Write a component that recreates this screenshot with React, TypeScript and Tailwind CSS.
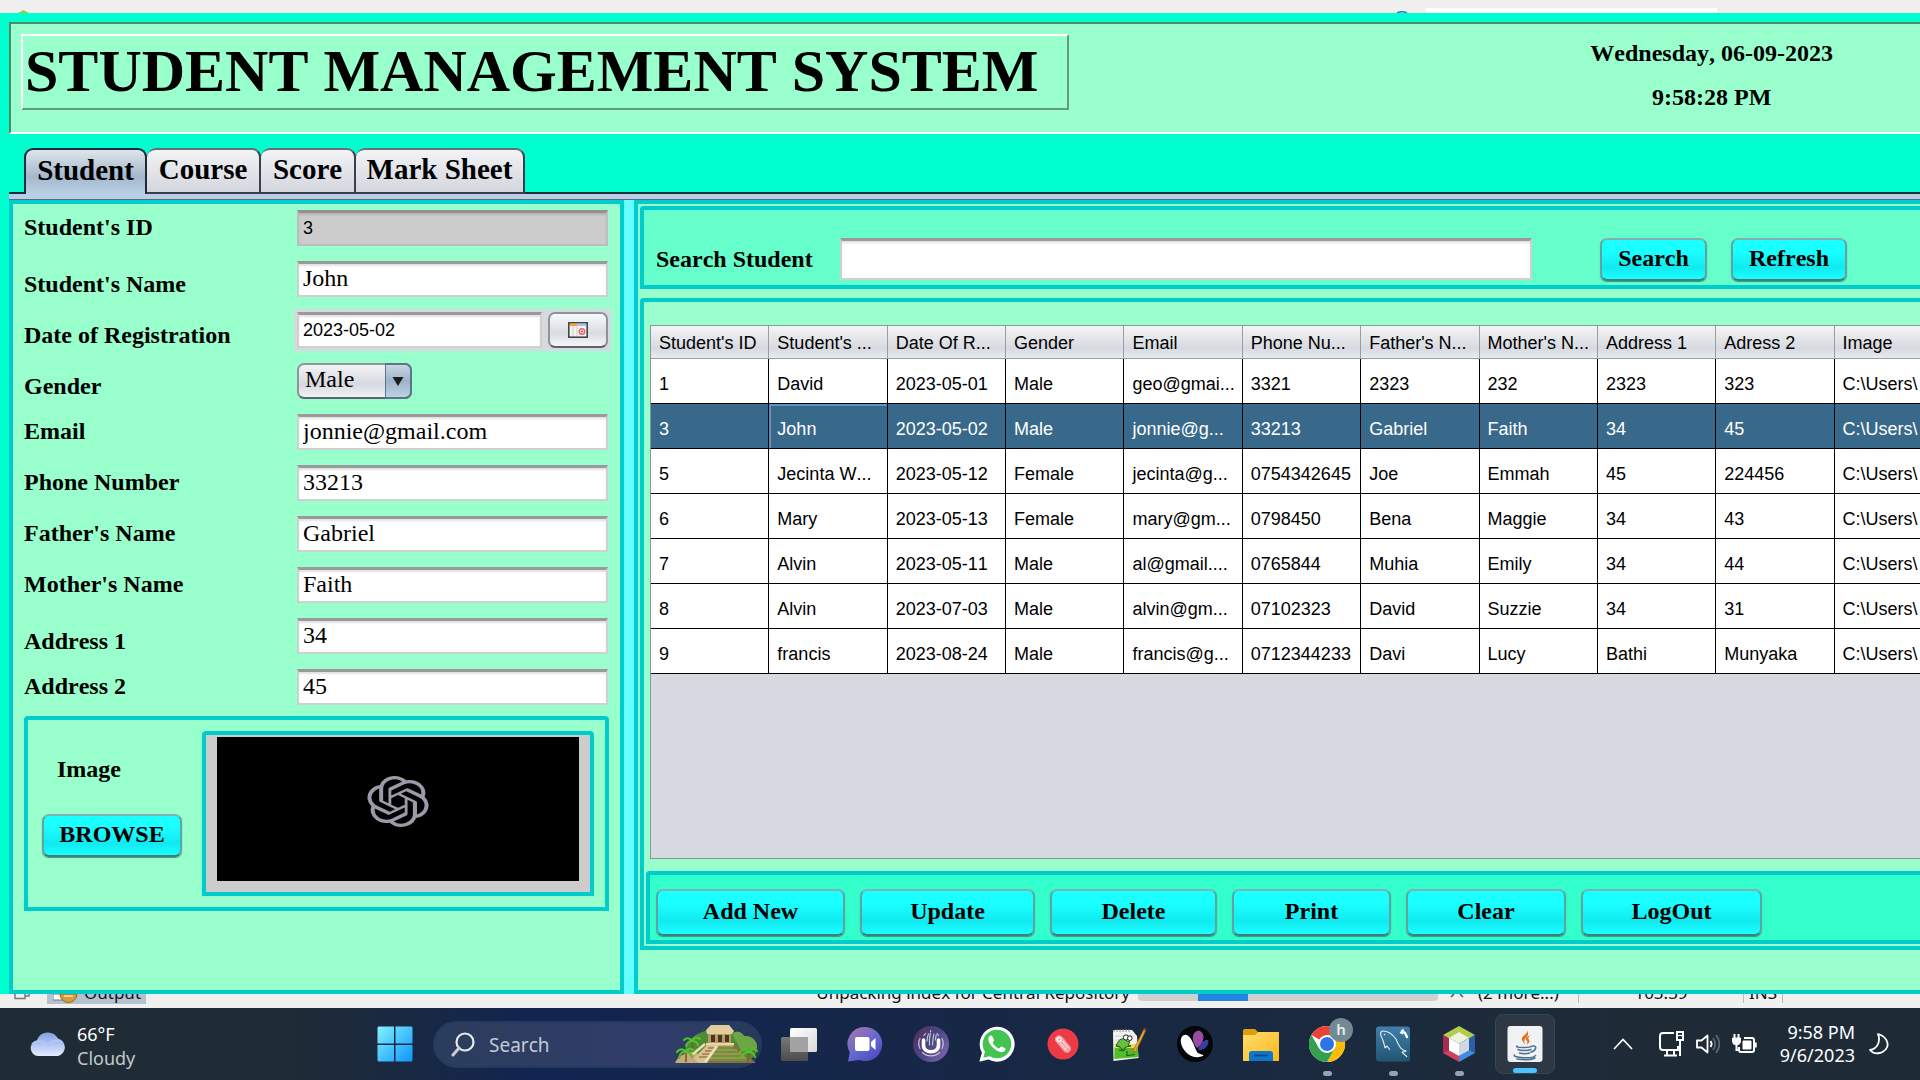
import React from "react";

const serif = "font-['Liberation_Serif',serif]";
const panelBorder = "border-4 border-[#00cccc]";

const fieldBox =
  "h-9 min-w-0 border-2 border-t-[3px] border-[#cdd2ce] border-t-[#9a9a9a] bg-white px-1 pb-0.5 text-black shadow-[inset_0_2px_2px_#e2e2e2] outline-none";

const aquaButton =
  "rounded-[7px] border-2 border-[#5fa3a3] border-t-[#7fb3b0] border-b-[#3f7f80] bg-linear-to-b from-[#1affff] from-30% via-[#10eaf0] via-70% to-[#1affff] pb-[3px] text-center text-2xl font-bold text-black shadow-[0_1px_1px_#33997d]";

const columns = [
  "Student's ID",
  "Student's ...",
  "Date Of R...",
  "Gender",
  "Email",
  "Phone Nu...",
  "Father's N...",
  "Mother's N...",
  "Address 1",
  "Adress 2",
  "Image",
];

const path = "C:\\Users\\";

const rows = [
  ["1", "David", "2023-05-01", "Male", "geo@gmai...", "3321", "2323", "232", "2323", "323", path],
  ["3", "John", "2023-05-02", "Male", "jonnie@g...", "33213", "Gabriel", "Faith", "34", "45", path],
  ["5", "Jecinta W...", "2023-05-12", "Female", "jecinta@g...", "0754342645", "Joe", "Emmah", "45", "224456", path],
  ["6", "Mary", "2023-05-13", "Female", "mary@gm...", "0798450", "Bena", "Maggie", "34", "43", path],
  ["7", "Alvin", "2023-05-11", "Male", "al@gmail....", "0765844", "Muhia", "Emily", "34", "44", path],
  ["8", "Alvin", "2023-07-03", "Male", "alvin@gm...", "07102323", "David", "Suzzie", "34", "31", path],
  ["9", "francis", "2023-08-24", "Male", "francis@g...", "0712344233", "Davi", "Lucy", "Bathi", "Munyaka", path],
];

function Row({ id, label, low, children }: { id: string; label: string; low?: boolean; children: React.ReactNode }) {
  return (
    <div className="flex h-9">
      <label
        htmlFor={id}
        className={
          low
            ? "flex h-9 w-[273px] shrink-0 items-center pt-2.5 text-2xl font-bold"
            : "flex h-9 w-[273px] shrink-0 items-center pb-0.5 text-2xl font-bold"
        }
      >
        {label}
      </label>
      {children}
    </div>
  );
}

function TextRow({ id, label, value, low }: { id: string; label: string; value: string; low?: boolean }) {
  return (
    <Row id={id} label={label} low={low}>
      <input id={id} defaultValue={value} className={`${fieldBox} flex-1 text-2xl`} />
    </Row>
  );
}

function StudentForm() {
  return (
    <section className={`${panelBorder} flex w-[615px] shrink-0 flex-col bg-[#99ffcc] pt-1.5 pl-[11px]`}>
      <form className="flex flex-col gap-[15px] pr-3" onSubmit={(e) => e.preventDefault()}>
        <Row id="sid" label="Student's ID">
          <input
            id="sid"
            readOnly
            defaultValue="3"
            className="h-9 min-w-0 flex-1 border-2 border-t-[3px] border-[#bdbdbd] border-t-[#929292] bg-[#cccccc] px-1 font-['Liberation_Sans',sans-serif] text-lg shadow-[inset_0_2px_2px_#b5b5b5] outline-none"
          />
        </Row>
        <TextRow id="sname" label="Student's Name" value="John" low />
        <Row id="reg" label="Date of Registration" low>
          <div className="flex flex-1 gap-1.5 bg-[#d6d9df] shadow-[0_0_0_3px_#d6d9df]">
            <input
              id="reg"
              defaultValue="2023-05-02"
              className="h-9 min-w-0 flex-1 border-2 border-t-[3px] border-[#cdd2ce] border-t-[#9a9a9a] bg-white px-1 font-['Liberation_Sans',sans-serif] text-lg shadow-[inset_0_2px_2px_#e2e2e2] outline-none"
            />
            <button
              aria-label="Choose date"
              className="flex h-9 w-[60px] items-center justify-center rounded-[7px] border-2 border-[#8f939b] border-b-[#5d626b] bg-linear-to-b from-[#f8f9fa] via-[#d9dce2] via-60% to-[#f4f6f9]"
            >
              <svg width="20" height="16" viewBox="0 0 20 16">
                <rect x="0.8" y="0.8" width="18.4" height="14.4" fill="#f4f4f4" stroke="#444" strokeWidth="1.6" />
                <rect x="2" y="1.6" width="7" height="2.4" fill="#f5a623" />
                <rect x="9" y="1.6" width="9" height="2.4" fill="#a9c3e6" />
                <path d="M5 4v10M9 4v10" stroke="#ccc" />
                <circle cx="14" cy="9.5" r="2.8" fill="#fbd3d3" stroke="#e46a6a" strokeWidth="1.4" />
                <path d="M13 9.5h2" stroke="#d33" />
              </svg>
            </button>
          </div>
        </Row>
        <Row id="gender" label="Gender" low>
          <div className="relative h-9 w-[115px]">
            <select
              id="gender"
              defaultValue="Male"
              className="h-9 w-full appearance-none rounded-[7px] border-2 border-[#8f939b] border-b-[#5d626b] bg-linear-to-b from-[#f2f3f5] via-[#d6d9df] via-60% to-[#f0f2f5] pb-1 pl-1.5 text-2xl leading-7 text-black outline-none"
            >
              <option>Male</option>
              <option>Female</option>
            </select>
            <span className="pointer-events-none absolute top-0 right-0 flex h-9 w-[27px] items-center justify-center rounded-r-[7px] border-2 border-l border-[#5c7388] bg-linear-to-b from-[#c9d6e3] via-[#9fb3c8] via-50% to-[#bdd2e6]">
              <svg width="12" height="9" viewBox="0 0 12 9">
                <path d="M0.5 0h11L6 9z" fill="#1c1c1c" />
              </svg>
            </span>
          </div>
        </Row>
        <TextRow id="email" label="Email" value="jonnie@gmail.com" />
        <TextRow id="phone" label="Phone Number" value="33213" />
        <TextRow id="father" label="Father's Name" value="Gabriel" />
        <TextRow id="mother" label="Mother's Name" value="Faith" />
        <TextRow id="addr1" label="Address 1" value="34" low />
        <TextRow id="addr2" label="Address 2" value="45" />
      </form>

      <div className={`${panelBorder} mt-[11px] mr-[11px] flex h-[195px] rounded-t-sm pt-[11px] pr-[11px] pl-[14px]`}>
        <div className="flex w-[160px] shrink-0 flex-col">
          <span className="mt-6 pl-[15px] text-2xl leading-7 font-bold">Image</span>
          <button className={`${aquaButton} mt-[31px] h-[43px] w-[140px]`}>BROWSE</button>
        </div>
        <div className={`${panelBorder} h-[165px] flex-1 rounded-t-sm bg-[#cccccc] px-[11px] pt-0.5`}>
          <div className="flex h-36 items-center justify-center bg-black pb-4">
            <svg width="62" height="51" viewBox="0 0 24 24" preserveAspectRatio="none" fill="#9a9aa8">
              <path d="M22.2819 9.8211a5.9847 5.9847 0 0 0-.5157-4.9108 6.0462 6.0462 0 0 0-6.5098-2.9A6.0651 6.0651 0 0 0 4.9807 4.1818a5.9847 5.9847 0 0 0-3.9977 2.9 6.0462 6.0462 0 0 0 .7427 7.0966 5.98 5.98 0 0 0 .511 4.9107 6.051 6.051 0 0 0 6.5146 2.9001A5.9847 5.9847 0 0 0 13.2599 24a6.0557 6.0557 0 0 0 5.7718-4.2058 5.9894 5.9894 0 0 0 3.9977-2.9001 6.0557 6.0557 0 0 0-.7475-7.0729zm-9.022 12.6081a4.4755 4.4755 0 0 1-2.8764-1.0408l.1419-.0804 4.7783-2.7582a.7948.7948 0 0 0 .3927-.6813v-6.7369l2.02 1.1686a.071.071 0 0 1 .038.052v5.5826a4.504 4.504 0 0 1-4.4945 4.4944zm-9.6607-4.1254a4.4708 4.4708 0 0 1-.5346-3.0137l.142.0852 4.783 2.7582a.7712.7712 0 0 0 .7806 0l5.8428-3.3685v2.3324a.0804.0804 0 0 1-.0332.0615L9.74 19.9502a4.4992 4.4992 0 0 1-6.1408-1.6464zM2.3408 7.8956a4.485 4.485 0 0 1 2.3655-1.9728V11.6a.7664.7664 0 0 0 .3879.6765l5.8144 3.3543-2.0201 1.1685a.0757.0757 0 0 1-.071 0l-4.8303-2.7865A4.504 4.504 0 0 1 2.3408 7.872zm16.5963 3.8558L13.1038 8.364 15.1192 7.2a.0757.0757 0 0 1 .071 0l4.8303 2.7913a4.4944 4.4944 0 0 1-.6765 8.1042v-5.6772a.79.79 0 0 0-.407-.667zm2.0107-3.0231l-.142-.0852-4.7735-2.7818a.7759.7759 0 0 0-.7854 0L9.409 9.2297V6.8974a.0662.0662 0 0 1 .0284-.0615l4.8303-2.7866a4.4992 4.4992 0 0 1 6.6802 4.66zM8.3065 12.863l-2.02-1.1638a.0804.0804 0 0 1-.038-.0567V6.0742a4.4992 4.4992 0 0 1 7.3757-3.4537l-.142.0805L8.704 5.459a.7948.7948 0 0 0-.3927.6813zm1.0976-2.3654l2.602-1.4998 2.6069 1.4998v2.9994l-2.5974 1.4997-2.6067-1.4997Z" />
            </svg>
          </div>
        </div>
      </div>
    </section>
  );
}

function StudentTable() {
  return (
    <div className="ml-1.5 h-[534px] overflow-hidden border border-r-0 border-[#8b95a0] bg-[#d6d9df]">
      <table className="w-[1302px] table-fixed border-separate border-spacing-0 font-['Liberation_Sans',sans-serif] text-lg">
        <thead>
          <tr>
            {columns.map((c) => (
              <th
                key={c}
                className="h-[33px] overflow-hidden border-r border-b border-[#9a9da5] bg-linear-to-b from-[#f4f5f7] via-[#d6d9df] via-70% to-[#e8ebf2] p-0 pt-0.5 pl-2 text-left font-normal whitespace-nowrap"
              >
                {c}
              </th>
            ))}
          </tr>
        </thead>
        <tbody>
          {rows.map((r, i) => (
            <tr key={r[0]} className={i === 1 ? "bg-[#39698a] text-white" : "bg-white text-black"}>
              {r.map((v, j) => (
                <td
                  key={j}
                  className={
                    i === 1 && j === 1
                      ? "h-[45px] overflow-hidden border-r border-b border-black p-0 pt-[5px] pl-2 whitespace-nowrap shadow-[inset_1px_1px_0_1px_#5f92c4]"
                      : "h-[45px] overflow-hidden border-r border-b border-black p-0 pt-[5px] pl-2 whitespace-nowrap"
                  }
                >
                  {v}
                </td>
              ))}
            </tr>
          ))}
        </tbody>
      </table>
    </div>
  );
}

function RecordsPanel() {
  return (
    <section className="flex min-w-0 flex-1 flex-col border-4 border-r-0 border-[#00cccc] bg-[#99ffcc] pt-0.5 pl-0.5">
      <div className="flex h-[83px] items-start rounded-tl-sm border-4 border-r-0 border-[#00cccc] bg-[#66ffcc] pt-7 pl-3">
        <label htmlFor="search" className="flex h-[42px] w-[184px] shrink-0 items-center text-2xl font-bold">
          Search Student
        </label>
        <input
          id="search"
          className="h-[42px] w-[692px] border-2 border-t-[3px] border-[#cdd2ce] border-t-[#9a9a9a] bg-white px-1 text-2xl shadow-[inset_0_2px_2px_#e2e2e2] outline-none"
        />
        <button className={`${aquaButton} ml-[68px] h-[43px] w-[107px]`}>Search</button>
        <button className={`${aquaButton} ml-6 h-[43px] w-[116px]`}>Refresh</button>
      </div>

      <div className="mt-[9px] flex flex-col rounded-tl-sm border-4 border-r-0 border-[#00cccc] pt-[23px] pb-0.5">
        <StudentTable />
        <div className="mt-3 ml-0.5 flex h-[73px] gap-[15px] rounded-tl-sm border-4 border-r-0 border-[#00cccc] bg-[#33ffcc] pt-[14px] pl-1.5">
          <button className={`${aquaButton} h-[47px] w-[189px]`}>Add New</button>
          <button className={`${aquaButton} h-[47px] w-[175px]`}>Update</button>
          <button className={`${aquaButton} h-[47px] w-[167px]`}>Delete</button>
          <button className={`${aquaButton} h-[47px] w-[159px]`}>Print</button>
          <button className={`${aquaButton} h-[47px] w-[160px]`}>Clear</button>
          <button className={`${aquaButton} h-[47px] w-[181px]`}>LogOut</button>
        </div>
      </div>
    </section>
  );
}

const tabBase =
  "h-[46px] rounded-t-[9px] border-2 pb-1 text-[29px] leading-none font-bold text-black";
const tabIdle = `${tabBase} border-[#3c3f4a] border-t-[#6a6d78] bg-linear-to-b from-[#f2f3f5] to-[#d4d6de]`;

function Tabs() {
  return (
    <nav className="ml-[9px] flex h-[52px] shrink-0 pl-[15px] shadow-[inset_0_-1px_0_#5c6b85,inset_0_-6px_0_#b8cfe5,inset_0_-8px_0_#14303a]">
      <button className={`${tabBase} w-[123px] border-b-0 border-[#1e2a3a] bg-linear-to-b from-[#dfe6ec] via-[#a4b8cc] via-60% to-[#b8cfe5]`}>
        Student
      </button>
      <button className={`${tabIdle} w-[114px] border-l-0`}>Course</button>
      <button className={`${tabIdle} w-[95px] border-l-0`}>Score</button>
      <button className={`${tabIdle} w-[169px] border-l-0`}>Mark Sheet</button>
    </nav>
  );
}

function TaskView() {
  return (
    <svg width="36" height="36" viewBox="0 0 36 36">
      <defs>
        <linearGradient id="tv1" x1="0" y1="0" x2="1" y2="1">
          <stop offset="0" stopColor="#fff" />
          <stop offset="1" stopColor="#d9d9d9" />
        </linearGradient>
        <linearGradient id="tv2" x1="0" y1="0" x2="0" y2="1">
          <stop offset="0" stopColor="#777" />
          <stop offset="1" stopColor="#4c4c4c" />
        </linearGradient>
      </defs>
      <rect x="9" y="2" width="27" height="24" rx="1.5" fill="url(#tv1)" />
      <rect x="0" y="11" width="27" height="24" rx="1.5" fill="url(#tv2)" />
      <path d="M9 11h18v15H10.500a1.500 1.500 0 0 1-1.500-1.500z" fill="#a3a3a3" />
    </svg>
  );
}

function Meet() {
  return (
    <svg width="36" height="36" viewBox="0 0 36 36">
      <defs>
        <linearGradient id="mt" x1="0" y1="0.2" x2="0.6" y2="1">
          <stop offset="0" stopColor="#a071b4" />
          <stop offset="0.6" stopColor="#6268d0" />
          <stop offset="1" stopColor="#5350c0" />
        </linearGradient>
      </defs>
      <path d="M18 1a17 17 0 1 1-5.500 33L1 35.500l1.800-9A17 17 0 0 1 18 1z" fill="url(#mt)" />
      <rect x="8" y="11" width="14.500" height="14" rx="2" fill="#fff" />
      <path d="M24 16l4.500-4v12L24 20z" fill="#fff" />
    </svg>
  );
}

function UApp() {
  return (
    <svg width="36" height="36" viewBox="0 0 36 36" fill="none">
      <defs>
        <linearGradient id="ua" x1="0" y1="0.2" x2="1" y2="0.9">
          <stop offset="0" stopColor="#51305f" />
          <stop offset="0.5" stopColor="#4a4a86" />
          <stop offset="1" stopColor="#8668b4" />
        </linearGradient>
      </defs>
      <circle cx="18" cy="18" r="18" fill="url(#ua)" />
      <path d="M10.500 14v5c0 9 15 9 15 0v-5" stroke="#fff" strokeWidth="3.600" strokeLinecap="round" />
      <path
        d="M14 15c0-3 .5-5 1.500-7M16.500 19c-.4-4 0-8 1-12M19.500 19c.4-4 .3-8 1.500-11M22.500 14c0-2 .3-3 .8-5M11 9.500l1.500-2M25.500 9.500L24 7.500M17.500 5.500l.3-1M7 12.500c-1.500 3-1.500 7 0 10M29 12.500c1.500 3 1.500 7 0 10M9.500 26.500c4.500 4.500 12.500 4.500 17 0"
        stroke="#c7c2de"
        strokeWidth="1.200"
        strokeLinecap="round"
      />
    </svg>
  );
}

function WhatsApp() {
  return (
    <svg width="36" height="36" viewBox="0 0 36 36">
      <path d="M0.300 35.800l2.600-9A17.500 17.500 0 1 1 9.500 33.400z" fill="#fff" />
      <path d="M4.300 31.800l1.700-6A14.300 14.300 0 1 1 10.700 30.300z" fill="#43c351" />
      <path
        d="M12.500 9.500c-1-.4-2.600.5-3 2.200-.8 3.500 2 7.500 5 10.400 3 2.800 6.500 4.600 9.300 4 2-.5 3-2 2.700-3.300-.1-.6-3.600-2.300-4.300-2.200-.8.200-1.500 2-2.300 2-1.400-.1-6-4.300-6.300-5.800 0-.8 1.400-1.600 1.400-2.500 0-.6-1.500-4.300-2.500-4.800z"
        fill="#fff"
      />
    </svg>
  );
}

function RedApp() {
  return (
    <svg width="36" height="36" viewBox="0 0 36 36" fill="none">
      <circle cx="18" cy="18" r="15.500" fill="#ed3b45" />
      <g transform="rotate(50 18 18)">
        <rect x="8" y="14" width="20" height="8" rx="4" fill="#f4a2a5" />
        <circle cx="12" cy="18" r="2" stroke="#fff" strokeWidth="1.200" />
        <path d="M16 16.500h8M16 19.500h8" stroke="#fbdcdd" strokeWidth="1.200" strokeLinecap="round" />
      </g>
    </svg>
  );
}

function NotepadPP() {
  return (
    <svg width="36" height="36" viewBox="0 0 36 36">
      <path d="M2 4h19l5 6 1.500 22L2.500 35z" fill="#f5f5f2" />
      <path d="M3 4v2M6 3v3M9 3v3M12 3v3M15 3v3M18 3v3" stroke="#888" />
      <path d="M4 10h19M4 14h8" stroke="#bcd0dc" />
      <path d="M3.500 21h23l.8 10-24 2z" fill="#52bd2a" />
      <path d="M3.500 18h22v4h-22z" fill="#f1d95c" />
      <path d="M7 16c2-4 7-4 9-1l3 1-2 3 3 1-5 1-4 3-2-3-4-1z" fill="#63c23f" stroke="#25571a" />
      <path d="M8 24l4 1 3-2M6 20l3 1" stroke="#25571a" fill="none" />
      <circle cx="15" cy="11.500" r="2.600" fill="#fff" stroke="#222" />
      <circle cx="18.800" cy="12.200" r="2.300" fill="#fff" stroke="#222" />
      <path d="M16 25v4.500l8-1" fill="none" stroke="#24611a" strokeWidth="1.200" />
      <path d="M33 3l2 1-10 21-3 2 .6-3.500z" fill="#efa92b" stroke="#8c5b12" strokeWidth="0.600" />
      <path d="M33 2l2.300 1-1 2.200-2.200-1z" fill="#a8402c" />
    </svg>
  );
}

function Petals() {
  return (
    <svg width="36" height="36" viewBox="0 0 36 36">
      <circle cx="18" cy="18" r="18" fill="#05060a" />
      <path d="M31 14c-2-1.500-8 2-10 10 6 1 12-5 10-10z" fill="#3b3f9c" />
      <path d="M22 4.500c-8 1-8 11-2 17.500 6-4 10-14 2-17.500z" fill="#9a4aa3" />
      <path d="M6 9.500c-5 4-1 14 5 18.500 5 3.500 10 4 15 2 2-2-4-1-6-4-3-6-7-21-14-16.500z" fill="#fff" />
    </svg>
  );
}

function Folder() {
  return (
    <svg width="36" height="36" viewBox="0 0 36 36">
      <defs>
        <linearGradient id="fd" x1="0" y1="0" x2="1" y2="1">
          <stop offset="0" stopColor="#ffdd6e" />
          <stop offset="1" stopColor="#fbb91a" />
        </linearGradient>
      </defs>
      <path d="M0 4.500A1.500 1.500 0 0 1 1.500 3H12l3 3h3v8H0z" fill="#dd9f0c" />
      <path d="M0 9h12l3.500-3H36v29H0z" fill="url(#fd)" />
      <path d="M6 35v-7a3 3 0 0 1 3-3h18a3 3 0 0 1 3 3v7z" fill="#0f75c8" />
      <path d="M11 29.500h14" stroke="#0a4b8c" strokeWidth="1.800" />
    </svg>
  );
}

function Chrome() {
  return (
    <svg width="46" height="44" viewBox="0 0 46 44" className="-mt-2 ml-2.5">
      <circle cx="18" cy="26" r="18" fill="#fff" />
      <path d="M18 26L2.400 17a18 18 0 0 1 31.200 0z" fill="#ea4335" />
      <path d="M18 17h15.600A18 18 0 0 1 18 44l7.800-13.500z" fill="#fbbc05" />
      <path d="M10.200 30.500L2.400 17A18 18 0 0 0 18 44l7.800-13.500z" fill="#34a04e" />
      <circle cx="18" cy="26" r="9" fill="#fff" />
      <circle cx="18" cy="26" r="7" fill="#2f74e6" />
      <circle cx="32" cy="12" r="12" fill="#728a94" />
      <text x="32" y="17" textAnchor="middle" fontSize="15" fontWeight="600" fill="#e6ecee" fontFamily="Noto Sans, sans-serif">
        h
      </text>
    </svg>
  );
}

function MySql() {
  return (
    <svg width="36" height="36" viewBox="0 0 36 36" fill="none">
      <defs>
        <linearGradient id="ms" x1="0" y1="0" x2="0" y2="1">
          <stop offset="0" stopColor="#3e80ab" />
          <stop offset="1" stopColor="#225470" />
        </linearGradient>
      </defs>
      <rect x="1" y="0.500" width="34" height="35" rx="3" fill="url(#ms)" />
      <path
        d="M10 22c-1-4-1-6-3-10-2-3-2-7 1-7 6 0 10 4 13 8 1 3 2 5 4 8 1 2 3 3 6 4-1 1-3 1-4 1 1 2 4 3 5 5M10 22l2-2 3 4M9 8l1 1"
        stroke="#e7eef3"
        strokeWidth="1.100"
        strokeLinejoin="round"
      />
      <path d="M27 5l3 2 2 4" stroke="#fff" strokeWidth="2.400" strokeLinecap="round" />
      <path d="M25.500 6.500l2 1M28 3.500v2" stroke="#fff" strokeWidth="1.500" strokeLinecap="round" />
    </svg>
  );
}

function NetBeans() {
  return (
    <svg width="36" height="36" viewBox="0 0 36 36">
      <path d="M18 0l16 9-6 3.500-10-5.500-10 5.500L2 9z" fill="#b3cc50" />
      <path d="M2 9l6 3.500v12L18 30v6L2 27z" fill="#d0405f" />
      <path d="M34 9l-6 3.500v12L18 30v6l16-9z" fill="#3f8de0" />
      <path d="M2 9l6 3.500v12L2 27z" fill="#a92a4a" />
      <path d="M34 9l-6 3.500v12l6 2.500z" fill="#2c5fa6" />
      <path d="M18 6l10 6-10 5.500L8 12z" fill="#eff3de" />
      <path d="M8 12l10 5.500V30L8 24.500z" fill="#fff" />
      <path d="M28 12l-10 5.500V30l10-5.500z" fill="#cfd8e4" />
    </svg>
  );
}

function JavaIcon() {
  return (
    <svg width="36" height="36" viewBox="0 0 36 36" fill="none">
      <rect x="0.500" y="0" width="35" height="36" rx="3" fill="#f1f2f4" />
      <path d="M20 3c3 5-7 7-5 11 .6 1.500 2 3 3 5-1-4-1-5 1-7s3-5 1-9z" fill="#e8711c" />
      <path d="M24 9c-5 2-6 4-4 6 1 1.500 0 3-1 4 4-2 4-4 2.500-6-.8-1 .5-2.500 2.500-4z" fill="#e8711c" />
      <path
        d="M10 20c-3 2 13 2 15 0M11 23.500c2 1.300 10 1.300 13 0M12.500 27c2 1 8 1 10 0M25 20c6-1 4 5-1 6M7.500 29c-3 3 19 4 21 .5M10 33c6 1 14 1 18-1"
        stroke="#4f6f92"
        strokeWidth="1.500"
        strokeLinecap="round"
      />
    </svg>
  );
}

function Temple() {
  return (
    <svg width="86" height="40" viewBox="0 0 86 40">
      <path d="M10 30c2-14 12-22 26-24l22 4c4-4 10-2 12 2 8-1 14 6 13 12 0 6-4 10-10 14l-40 1z" fill="#4e8c33" />
      <path d="M58 10c4-4 10-2 12 2 8-1 14 6 13 12l-16 2z" fill="#6ba647" />
      <path d="M1 39c3-7 10-11 20-11l16 11z" fill="#c8aa78" />
      <path d="M30 20h30l22 19H26z" fill="#8a6c40" />
      <path d="M38 24h22M37 28h28M36 32h35M34 36h42" stroke="#5f9c36" strokeWidth="2" />
      <path d="M38 22h21M37 26h26M36 30h32M34 34h38" stroke="#c9ab72" strokeWidth="1.200" />
      <path d="M34 9h23v11H34z" fill="#b79a66" />
      <path d="M37 1h18l5 6-2 3H33l-1-4z" fill="#e2cd9b" />
      <path d="M37 11h4v7h-4zM44 11h4v7h-4zM51 11h4v7h-4z" fill="#4a351d" />
      <path d="M32 19h28v2.500H32z" fill="#e8d6a8" />
      <path d="M33 21h12L33 39H24L20 34z" fill="#d9c190" />
      <path d="M34 24h8M31 27h9M28 30h10M25 33h11" stroke="#9b7c4d" strokeWidth="1.400" />
      <path d="M31 20L19 30M43 22L31 38" stroke="#f0e0b6" strokeWidth="2.500" />
      <path d="M12 28v10M18 17l1 9M75 28l-1 10" stroke="#7b5a2b" strokeWidth="1.600" />
      <path
        d="M12 28c-3-4-7-3-9 0M12 28c2-4 6-4 8-1M12 28c-4-1-6 2-7 6M12 28c3 0 5 2 6 5M18 17c-3-4-6-3-8-1M18 17c2-4 6-4 8-2M18 17c-4 0-5 2-6 5M18 17c3 0 5 1 6 4M75 28c-3-4-7-3-9 0M75 28c2-4 6-4 8-1M75 28c-4-1-6 2-7 6M75 28c3 0 5 2 6 5"
        fill="none"
        stroke="#55c02c"
        strokeWidth="2.200"
        strokeLinecap="round"
      />
    </svg>
  );
}

const apps = [
  { name: "Task view", icon: <TaskView /> },
  { name: "Meet", icon: <Meet /> },
  { name: "U", icon: <UApp /> },
  { name: "WhatsApp", icon: <WhatsApp /> },
  { name: "Clip", icon: <RedApp /> },
  { name: "Notepad++", icon: <NotepadPP /> },
  { name: "Petals", icon: <Petals /> },
  { name: "File Explorer", icon: <Folder /> },
  { name: "Chrome", icon: <Chrome />, running: true },
  { name: "MySQL Workbench", icon: <MySql />, running: true },
  { name: "NetBeans", icon: <NetBeans />, running: true },
];

function Taskbar() {
  return (
    <footer className="flex h-[72px] shrink-0 items-center bg-linear-to-r from-[#1f2b35] from-15% via-[#122450] via-28% to-[#1e2b37] to-85% font-['Noto_Sans',sans-serif] text-white">
      <div className="flex w-[377px] shrink-0 items-center gap-2.5 pl-[29px]">
        <svg width="38" height="26" viewBox="0 0 38 26">
          <defs>
            <linearGradient id="cl" x1="0" y1="0" x2="0" y2="1">
              <stop offset="0" stopColor="#7f9fe6" />
              <stop offset="1" stopColor="#e3ebff" />
            </linearGradient>
          </defs>
          <path d="M9 25a8 8 0 0 1-1-15.800A11.500 11.500 0 0 1 29 7.500 9 9 0 0 1 29 25z" fill="url(#cl)" />
          <path d="M3 13c6-5 13-3 16 3 2-6 8-9 14-5" fill="none" stroke="#b4c8f8" strokeWidth="2" opacity="0.800" />
        </svg>
        <div className="pt-1 text-lg leading-6">
          <div>66°F</div>
          <div className="text-[#c3c8cd]">Cloudy</div>
        </div>
      </div>
      <button aria-label="Start" className="shrink-0">
        <svg width="36" height="36" viewBox="0 0 36 36">
          <defs>
            <linearGradient id="wn" gradientUnits="userSpaceOnUse" x1="0" y1="0" x2="36" y2="36">
              <stop offset="0" stopColor="#86f3ff" />
              <stop offset="0.500" stopColor="#45c4ff" />
              <stop offset="1" stopColor="#0c93ff" />
            </linearGradient>
          </defs>
          <path d="M1.500 0.500H17v17H0.500v-16zM18.500 0.500h16l1 1v16h-17zM0.500 19H17v16.500H1.500l-1-1zM18.500 19h17v15.500l-1 1h-16z" fill="url(#wn)" />
        </svg>
      </button>
      <div className="ml-5 flex h-[47px] w-[329px] shrink-0 items-center rounded-full border-2 border-[#243a5e] bg-linear-to-r from-[#2b3d5c] via-[#303d6b] via-70% to-[#263a5a] pl-4">
        <svg width="24" height="25" viewBox="0 0 24 25" fill="none">
          <circle cx="14" cy="10" r="8.500" stroke="#e8ebf0" strokeWidth="2.200" />
          <path d="M8 16l-6 7" stroke="#c9ced8" strokeWidth="3" strokeLinecap="round" />
        </svg>
        <input
          aria-label="Search"
          placeholder="Search"
          className="ml-3.5 min-w-0 flex-1 bg-transparent pt-0.5 text-[19px] text-white outline-none placeholder:text-[#c5cad6]"
        />
        <Temple />
      </div>
      <div className="ml-1 flex">
        {apps.map((a) => (
          <button key={a.name} aria-label={a.name} className="relative flex h-[60px] w-[66px] shrink-0 items-center justify-center">
            {a.icon}
            {a.running && <span className="absolute -bottom-0.5 left-[29px] h-[5px] w-[9px] rounded-full bg-[#99a0b0]" />}
          </button>
        ))}
        <button
          aria-label="Java"
          className="relative ml-[3px] flex h-[60px] w-[60px] shrink-0 items-center justify-center rounded-lg border border-[#3c4652] bg-[#2d3844]"
        >
          <JavaIcon />
          <span className="absolute bottom-0 left-[17px] h-[5px] w-6 rounded-full bg-[#4cc2ff]" />
        </button>
      </div>
      <div className="mr-[31px] ml-auto flex items-center">
        <svg width="20" height="12" viewBox="0 0 20 12" fill="none" stroke="#fff" strokeWidth="1.700" className="mr-[26px]">
          <path d="M1 11L10 1.500 19 11" />
        </svg>
        <svg width="25" height="26" viewBox="0 0 25 26" fill="none" stroke="#fff" strokeWidth="2" className="mr-3">
          <path d="M15 2H4a3 3 0 0 0-3 3v11a3 3 0 0 0 3 3h15v-4M8 19v5M15 19v5M5 24.500h13M18 1h6v8h-6zM21 9v16" />
          <path d="M18 4.500h6" strokeWidth="1.300" />
        </svg>
        <svg width="24" height="22" viewBox="0 0 24 22" fill="none" stroke="#fff" strokeWidth="1.800" className="mr-3">
          <path d="M1 7.500v7h4.500l6 5V2.500l-6 5z" strokeLinejoin="round" />
          <path d="M14.500 8c1.500 2 1.500 4 0 6" />
          <path d="M17 5c3 4 3 8 0 12M20 2c4.500 6 4.500 12 0 18" stroke="#5b6570" />
        </svg>
        <svg width="25" height="20" viewBox="0 0 25 20" fill="none" stroke="#fff" className="mr-[23px]">
          <path d="M12 4h8a2 2 0 0 1 2 2v10a2 2 0 0 1-2 2H9a2 2 0 0 1-2-2v-3" strokeWidth="2" />
          <path d="M11 7h8v8h-8z" fill="#fff" />
          <path d="M23.500 8.500v5" strokeWidth="2.500" />
          <path d="M0.500 4h8v3a4 4 0 0 1-8 0z" fill="#fff" />
          <path d="M2.500 0v4M6.500 0v4M4.500 10v6h3" strokeWidth="2" />
        </svg>
        <div className="text-right text-lg leading-[23px]">
          <div>9:58 PM</div>
          <div>9/6/2023</div>
        </div>
        <svg width="20" height="22" viewBox="0 0 20 22" fill="none" stroke="#fff" strokeWidth="1.800" className="ml-3.5">
          <path d="M9 1c8 2 12 10 8 15s-12 6-16 1c7-1 11-8 8-16z" strokeLinejoin="round" />
        </svg>
      </div>
    </footer>
  );
}

function IdeStatusBar() {
  return (
    <div className="flex h-3.5 shrink-0 items-start overflow-hidden bg-[#f0f0f0] pl-3.5 font-['Noto_Sans',sans-serif] text-[17px] leading-[22px] text-[#111]">
      <svg width="16" height="6" viewBox="0 0 16 6" fill="none" stroke="#777" strokeWidth="1.500">
        <path d="M1 0v4.500h10V0M11 2h4V0" />
      </svg>
      <div className="ml-[17px] flex h-2.5 w-[99px] items-start overflow-hidden bg-[#b4c1ce] pl-1.5">
        <svg width="25" height="9" viewBox="0 0 25 9">
          <path d="M0 0h10v6H0z" fill="#fff" stroke="#777" />
          <path d="M7 0a8 8 0 0 0 17 0z" fill="#d79a3f" stroke="#9a6518" />
          <path d="M11 2h9" stroke="#fbe3a8" strokeWidth="1.500" />
        </svg>
        <span className="-mt-3 ml-1.5">Output</span>
      </div>
      <span className="-mt-3 ml-auto whitespace-nowrap">Unpacking index for Central Repository</span>
      <div className="ml-2 flex h-[7px] w-[300px] rounded-b-sm bg-[#cfcfcf]">
        <div className="ml-[60px] w-[50px] bg-[#2384e3]" />
      </div>
      <svg width="14" height="4" viewBox="0 0 14 4" fill="none" stroke="#555" strokeWidth="1.500" className="ml-3">
        <path d="M1 3l3-3M13 3l-3-3" />
      </svg>
      <span className="-mt-3 ml-3.5 w-[100px]">(2 more...)</span>
      <span className="h-[9px] w-[166px] overflow-hidden border-x border-[#bbb] text-center">
        <span className="-mt-3 block">103:39</span>
      </span>
      <span className="h-[9px] w-[39px] overflow-hidden border-r border-[#bbb] text-center">
        <span className="-mt-3 block">INS</span>
      </span>
      <span className="w-[137px] shrink-0" />
    </div>
  );
}

export default function App() {
  return (
    <div className={`${serif} flex min-h-screen flex-col overflow-hidden bg-[#00ffcf] text-black [font-kerning:none]`}>
      <div className="flex h-[13px] shrink-0 items-end bg-[#f0f0f0] pr-[203px] pl-[18px]">
        <svg width="11" height="3" viewBox="0 0 11 3">
          <path d="M0 3L5.500 0 11 3z" fill="#a6c838" />
        </svg>
        <svg width="12" height="2" viewBox="0 0 12 2" className="mr-[18px] ml-auto">
          <path d="M1 2q5-2.500 10 0" fill="none" stroke="#3b7bbf" strokeWidth="1.500" />
        </svg>
        <div className="h-[5px] w-[291px] bg-white" />
      </div>

      <header className="mt-[9px] ml-[9px] flex h-28 shrink-0 items-start border-2 border-r-0 border-[#4f8a6c] border-b-white bg-[#99ffcc] pt-2.5 pr-[87px] pl-2.5">
        <h1 className="flex h-[76px] w-[1048px] items-center border-2 border-white border-r-[#66997f] border-b-[#66997f] pb-0.5 pl-0.5 text-[60px] leading-none font-bold whitespace-nowrap">
          STUDENT MANAGEMENT SYSTEM
        </h1>
        <div className="ml-auto flex flex-col gap-4 pt-[5px] text-center text-2xl leading-7 font-bold">
          <span>Wednesday, 06-09-2023</span>
          <span>9:58:28 PM</span>
        </div>
      </header>

      <div className="h-[14px] shrink-0" />
      <Tabs />

      <main className="ml-[9px] flex flex-1 bg-[#66ffff]">
        <StudentForm />
        <div className="w-2.5 shrink-0" />
        <RecordsPanel />
      </main>

      <IdeStatusBar />
      <Taskbar />
    </div>
  );
}
